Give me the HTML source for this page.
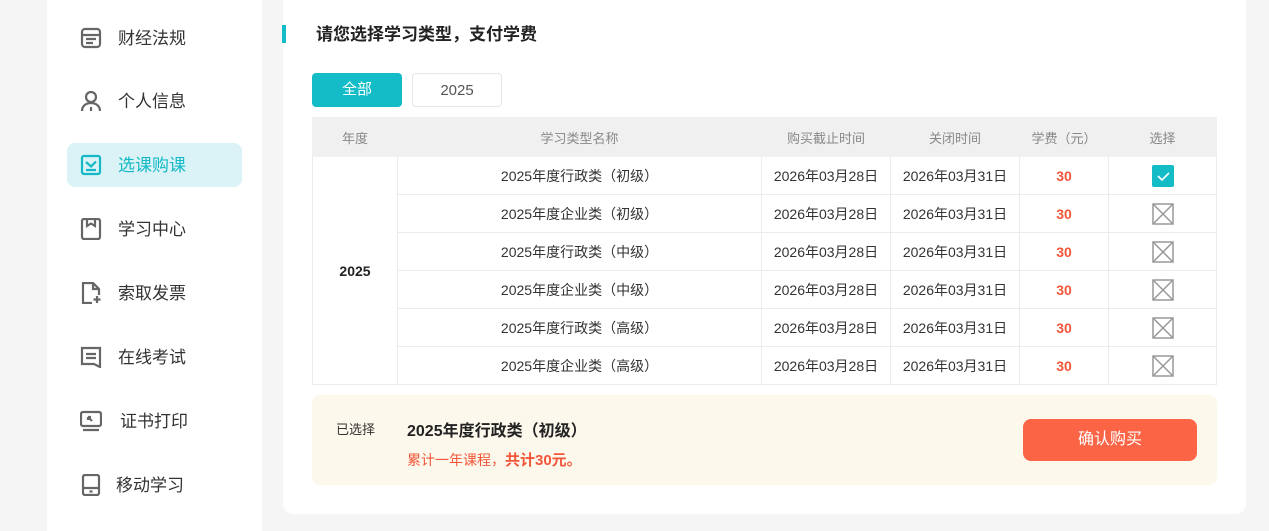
<!DOCTYPE html>
<html><head><meta charset="utf-8"><style>
*{margin:0;padding:0;box-sizing:border-box}
html,body{width:1269px;height:531px;overflow:hidden}
body{background:#f5f5f5;font-family:"Liberation Sans","Noto Sans CJK SC",sans-serif;position:relative;color:#333}
.side{position:absolute;left:47px;top:-10px;width:215px;height:560px;background:#fff;border-radius:10px}
.mi{position:absolute;left:67px;width:175px;height:44px;border-radius:8px;font-size:17px;color:#333;line-height:44px}
.mi svg{position:absolute;left:13px;top:11px}
.mi span{position:absolute;left:51px;top:1px}
.mi.on{background:#dbf3f7;color:#14b8c6}
.main{position:absolute;left:283px;top:-10px;width:963px;height:524px;background:#fff;border-radius:10px}
.bar{position:absolute;left:282px;top:25px;width:4px;height:18px;background:#14bcc8}
.title{position:absolute;left:316px;top:24px;font-size:17px;font-weight:bold;color:#222;line-height:22px}
.tab{position:absolute;top:73px;height:34px;width:90px;border-radius:4px;text-align:center;line-height:34px;font-size:15px}
table{position:absolute;left:312px;top:117px;border-collapse:collapse;width:905px;font-size:14px}
td,th{border:1px solid #ebebeb;text-align:center;height:38px;padding:0}
th{background:#f0f0f0;font-weight:normal;color:#888;border-color:#f0f0f0;height:39px;font-size:13px}
.p{color:#f2563a;font-weight:bold}
.cb{display:inline-block;width:22px;height:22px;vertical-align:middle}
.sum{position:absolute;left:312px;top:395px;width:905px;height:90px;background:#fdf8ec;border-radius:8px}
.btn{position:absolute;left:711px;top:24px;width:174px;height:42px;background:#fb6546;border-radius:8px;color:#fff;text-align:center;line-height:42px;font-size:16px}
</style></head><body>
<div class="side"></div>
<div class="mi" style="top:16px"><svg width="22" height="22" viewBox="0 0 22 22" fill="none" stroke="#666" stroke-width="2.2"><rect x="2" y="2" width="18" height="18" rx="3"/><path d="M2 8h18M6 12h10M6 16h7"/></svg><span>财经法规</span></div>
<div class="mi" style="top:79px"><svg width="22" height="22" viewBox="0 0 22 22" fill="none" stroke="#666" stroke-width="2.2"><circle cx="11" cy="7" r="5"/><path d="M2 21c0-5 4-8 9-8s9 3 9 8M11 17v4"/></svg><span>个人信息</span></div>
<div class="mi on" style="top:143px"><svg width="22" height="22" viewBox="0 0 22 22" fill="none" stroke="#14b8c6" stroke-width="2.2"><rect x="2" y="2" width="18" height="18" rx="2"/><path d="M6 8l5 4.5 5-5M6 16h10"/></svg><span>选课购课</span></div>
<div class="mi" style="top:207px"><svg width="22" height="22" viewBox="0 0 22 22" fill="none" stroke="#666" stroke-width="2.2"><rect x="2" y="1" width="18" height="20" rx="2"/><path d="M7 1v7l4-2.5 4 2.5V1"/></svg><span>学习中心</span></div>
<div class="mi" style="top:271px"><svg width="22" height="22" viewBox="0 0 22 22" fill="none" stroke="#666" stroke-width="2.2"><path d="M12 21H3V1h10l6 6v6M13 1v6h6M17 14v7M13.5 17.5h7"/></svg><span>索取发票</span></div>
<div class="mi" style="top:335px"><svg width="22" height="22" viewBox="0 0 22 22" fill="none" stroke="#666" stroke-width="2.2"><path d="M2 2h18v19l-6-3H2zM6 8h10M6 12h10"/></svg><span>在线考试</span></div>
<div class="mi" style="top:399px"><svg width="22" height="22" viewBox="0 0 22 22" fill="none" stroke="#666" stroke-width="2.2"><rect x="1" y="2" width="20" height="14" rx="2"/><path d="M3 20h16M8 7l4 4M8 7h3M8 7v3"/></svg><span style="left:53px">证书打印</span></div>
<div class="mi" style="top:463px"><svg width="22" height="22" viewBox="0 0 22 22" fill="none" stroke="#666" stroke-width="2.2"><rect x="3" y="1" width="16" height="20" rx="2"/><path d="M3 14h16M9.5 17.5h3"/></svg><span style="left:49px">移动学习</span></div>
<div class="main"></div>
<div class="bar"></div>
<div class="title">请您选择学习类型，支付学费</div>
<div class="tab" style="left:312px;background:#14bcc8;color:#fff">全部</div>
<div class="tab" style="left:412px;border:1px solid #e6e6e6;color:#555">2025</div>
<table>
<tr><th style="width:85px">年度</th><th style="width:364px">学习类型名称</th><th style="width:129px">购买截止时间</th><th style="width:129px">关闭时间</th><th style="width:89px">学费（元）</th><th>选择</th></tr>
<tr><td rowspan="6" style="font-weight:bold;color:#222">2025</td><td>2025年度行政类（初级）</td><td>2026年03月28日</td><td>2026年03月31日</td><td class="p">30</td><td><svg class="cb" viewBox="0 0 22 22"><rect width="22" height="22" rx="2" fill="#14bcc8"/><path d="M6 11l4 4 7-7" stroke="#fff" stroke-width="1.6" fill="none"/></svg></td></tr>
<tr><td>2025年度企业类（初级）</td><td>2026年03月28日</td><td>2026年03月31日</td><td class="p">30</td><td><svg class="cb" viewBox="0 0 22 22" fill="none" stroke="#999" stroke-width="1.5"><rect x="1" y="1" width="20" height="20"/><path d="M1 1l20 20M21 1L1 21"/></svg></td></tr>
<tr><td>2025年度行政类（中级）</td><td>2026年03月28日</td><td>2026年03月31日</td><td class="p">30</td><td><svg class="cb" viewBox="0 0 22 22" fill="none" stroke="#999" stroke-width="1.5"><rect x="1" y="1" width="20" height="20"/><path d="M1 1l20 20M21 1L1 21"/></svg></td></tr>
<tr><td>2025年度企业类（中级）</td><td>2026年03月28日</td><td>2026年03月31日</td><td class="p">30</td><td><svg class="cb" viewBox="0 0 22 22" fill="none" stroke="#999" stroke-width="1.5"><rect x="1" y="1" width="20" height="20"/><path d="M1 1l20 20M21 1L1 21"/></svg></td></tr>
<tr><td>2025年度行政类（高级）</td><td>2026年03月28日</td><td>2026年03月31日</td><td class="p">30</td><td><svg class="cb" viewBox="0 0 22 22" fill="none" stroke="#999" stroke-width="1.5"><rect x="1" y="1" width="20" height="20"/><path d="M1 1l20 20M21 1L1 21"/></svg></td></tr>
<tr><td>2025年度企业类（高级）</td><td>2026年03月28日</td><td>2026年03月31日</td><td class="p">30</td><td><svg class="cb" viewBox="0 0 22 22" fill="none" stroke="#999" stroke-width="1.5"><rect x="1" y="1" width="20" height="20"/><path d="M1 1l20 20M21 1L1 21"/></svg></td></tr>
</table>
<div class="sum">
<div style="position:absolute;left:24px;top:24px;font-size:13px;color:#333">已选择</div>
<div style="position:absolute;left:95px;top:22px;font-size:16px;font-weight:bold;color:#222">2025年度行政类（初级）</div>
<div style="position:absolute;left:95px;top:54px;font-size:14px;color:#f2563a">累计一年课程，<b style="font-size:15px">共计30元。</b></div>
<div class="btn">确认购买</div>
</div>
</body></html>
